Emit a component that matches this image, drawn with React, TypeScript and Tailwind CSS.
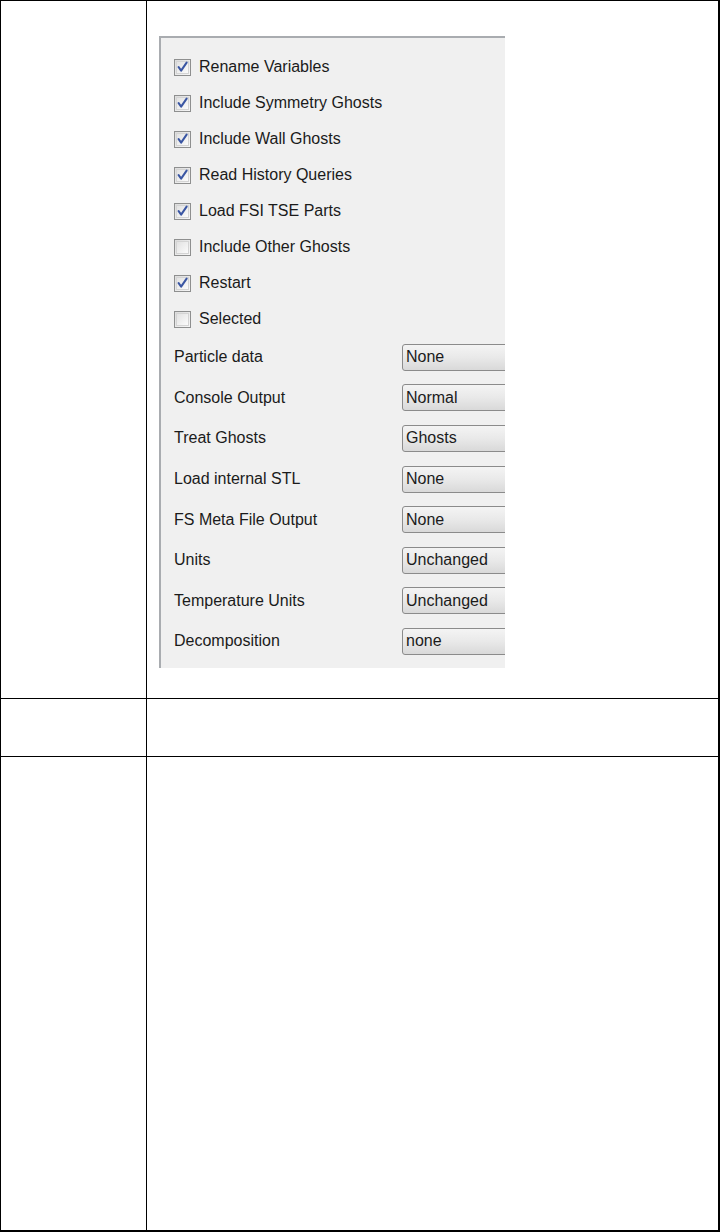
const checks: { label: string; checked: boolean }[] = [
  { label: "Rename Variables", checked: true },
  { label: "Include Symmetry Ghosts", checked: true },
  { label: "Include Wall Ghosts", checked: true },
  { label: "Read History Queries", checked: true },
  { label: "Load FSI TSE Parts", checked: true },
  { label: "Include Other Ghosts", checked: false },
  { label: "Restart", checked: true },
  { label: "Selected", checked: false },
];

const selects: [string, string][] = [
  ["Particle data", "None"],
  ["Console Output", "Normal"],
  ["Treat Ghosts", "Ghosts"],
  ["Load internal STL", "None"],
  ["FS Meta File Output", "None"],
  ["Units", "Unchanged"],
  ["Temperature Units", "Unchanged"],
  ["Decomposition", "none"],
];

function CheckBox({ checked }: { checked: boolean }) {
  return (
    <div className="w-[17px] h-[17px] border border-[#8e8f8f] bg-gradient-to-br from-[#dcdcdc] to-[#f6f6f6] flex items-center justify-center shrink-0">
      <div className="w-[13px] h-[13px] border border-[#d4d4d4] bg-gradient-to-br from-[#e2e2e2] to-[#fbfbfb] flex items-center justify-center">
        {checked && (
          <svg className="w-[12px] h-[12px]" viewBox="0 0 12 12">
            <path d="M1.8 6.2 L4.5 10 L10.5 1.2" fill="none" stroke="#3a56a3" strokeWidth="2.2" strokeLinejoin="round" strokeLinecap="round" />
          </svg>
        )}
      </div>
    </div>
  );
}

export default function App() {
  return (
    <div className="w-[720px] h-[1232px] bg-white text-[#1b1b1b] font-['Liberation_Sans',Arial,sans-serif]">
      <div className="w-[720px] h-[1232px] border-l border-t border-r-2 border-b-2 border-black flex flex-col">
        {/* row 1 */}
        <div className="h-[698px] flex border-b border-black">
          <div className="w-[146px] border-r border-black shrink-0" />
          <div className="flex-1 pl-[12px] pt-[35px]">
            <div className="w-[346px] h-[632px] bg-[#f0f0f0] border-l-2 border-t-2 border-[#a9acb0] overflow-hidden pt-[11px] pl-[13px] text-[16px]">
              {checks.map((c) => (
                <div key={c.label} className="h-[36px] flex items-center">
                  <CheckBox checked={c.checked} />
                  <span className="ml-[8px] leading-none">{c.label}</span>
                </div>
              ))}
              {selects.map(([label, value]) => (
                <div key={label} className="h-[40.6px] flex items-center">
                  <span className="w-[228px] shrink-0 leading-none">{label}</span>
                  <div className="w-[150px] h-[27px] shrink-0 rounded-[3px] border border-[#8b8b8b] bg-gradient-to-b from-[#f4f4f4] via-[#e9e9e9] to-[#d9d9d9] flex items-center pl-[3px]">
                    <span className="leading-none">{value}</span>
                  </div>
                </div>
              ))}
            </div>
          </div>
        </div>
        {/* row 2 */}
        <div className="h-[58px] flex border-b border-black">
          <div className="w-[146px] border-r border-black shrink-0" />
          <div className="flex-1" />
        </div>
        {/* row 3 */}
        <div className="flex-1 flex">
          <div className="w-[146px] border-r border-black shrink-0" />
          <div className="flex-1" />
        </div>
      </div>
    </div>
  );
}
